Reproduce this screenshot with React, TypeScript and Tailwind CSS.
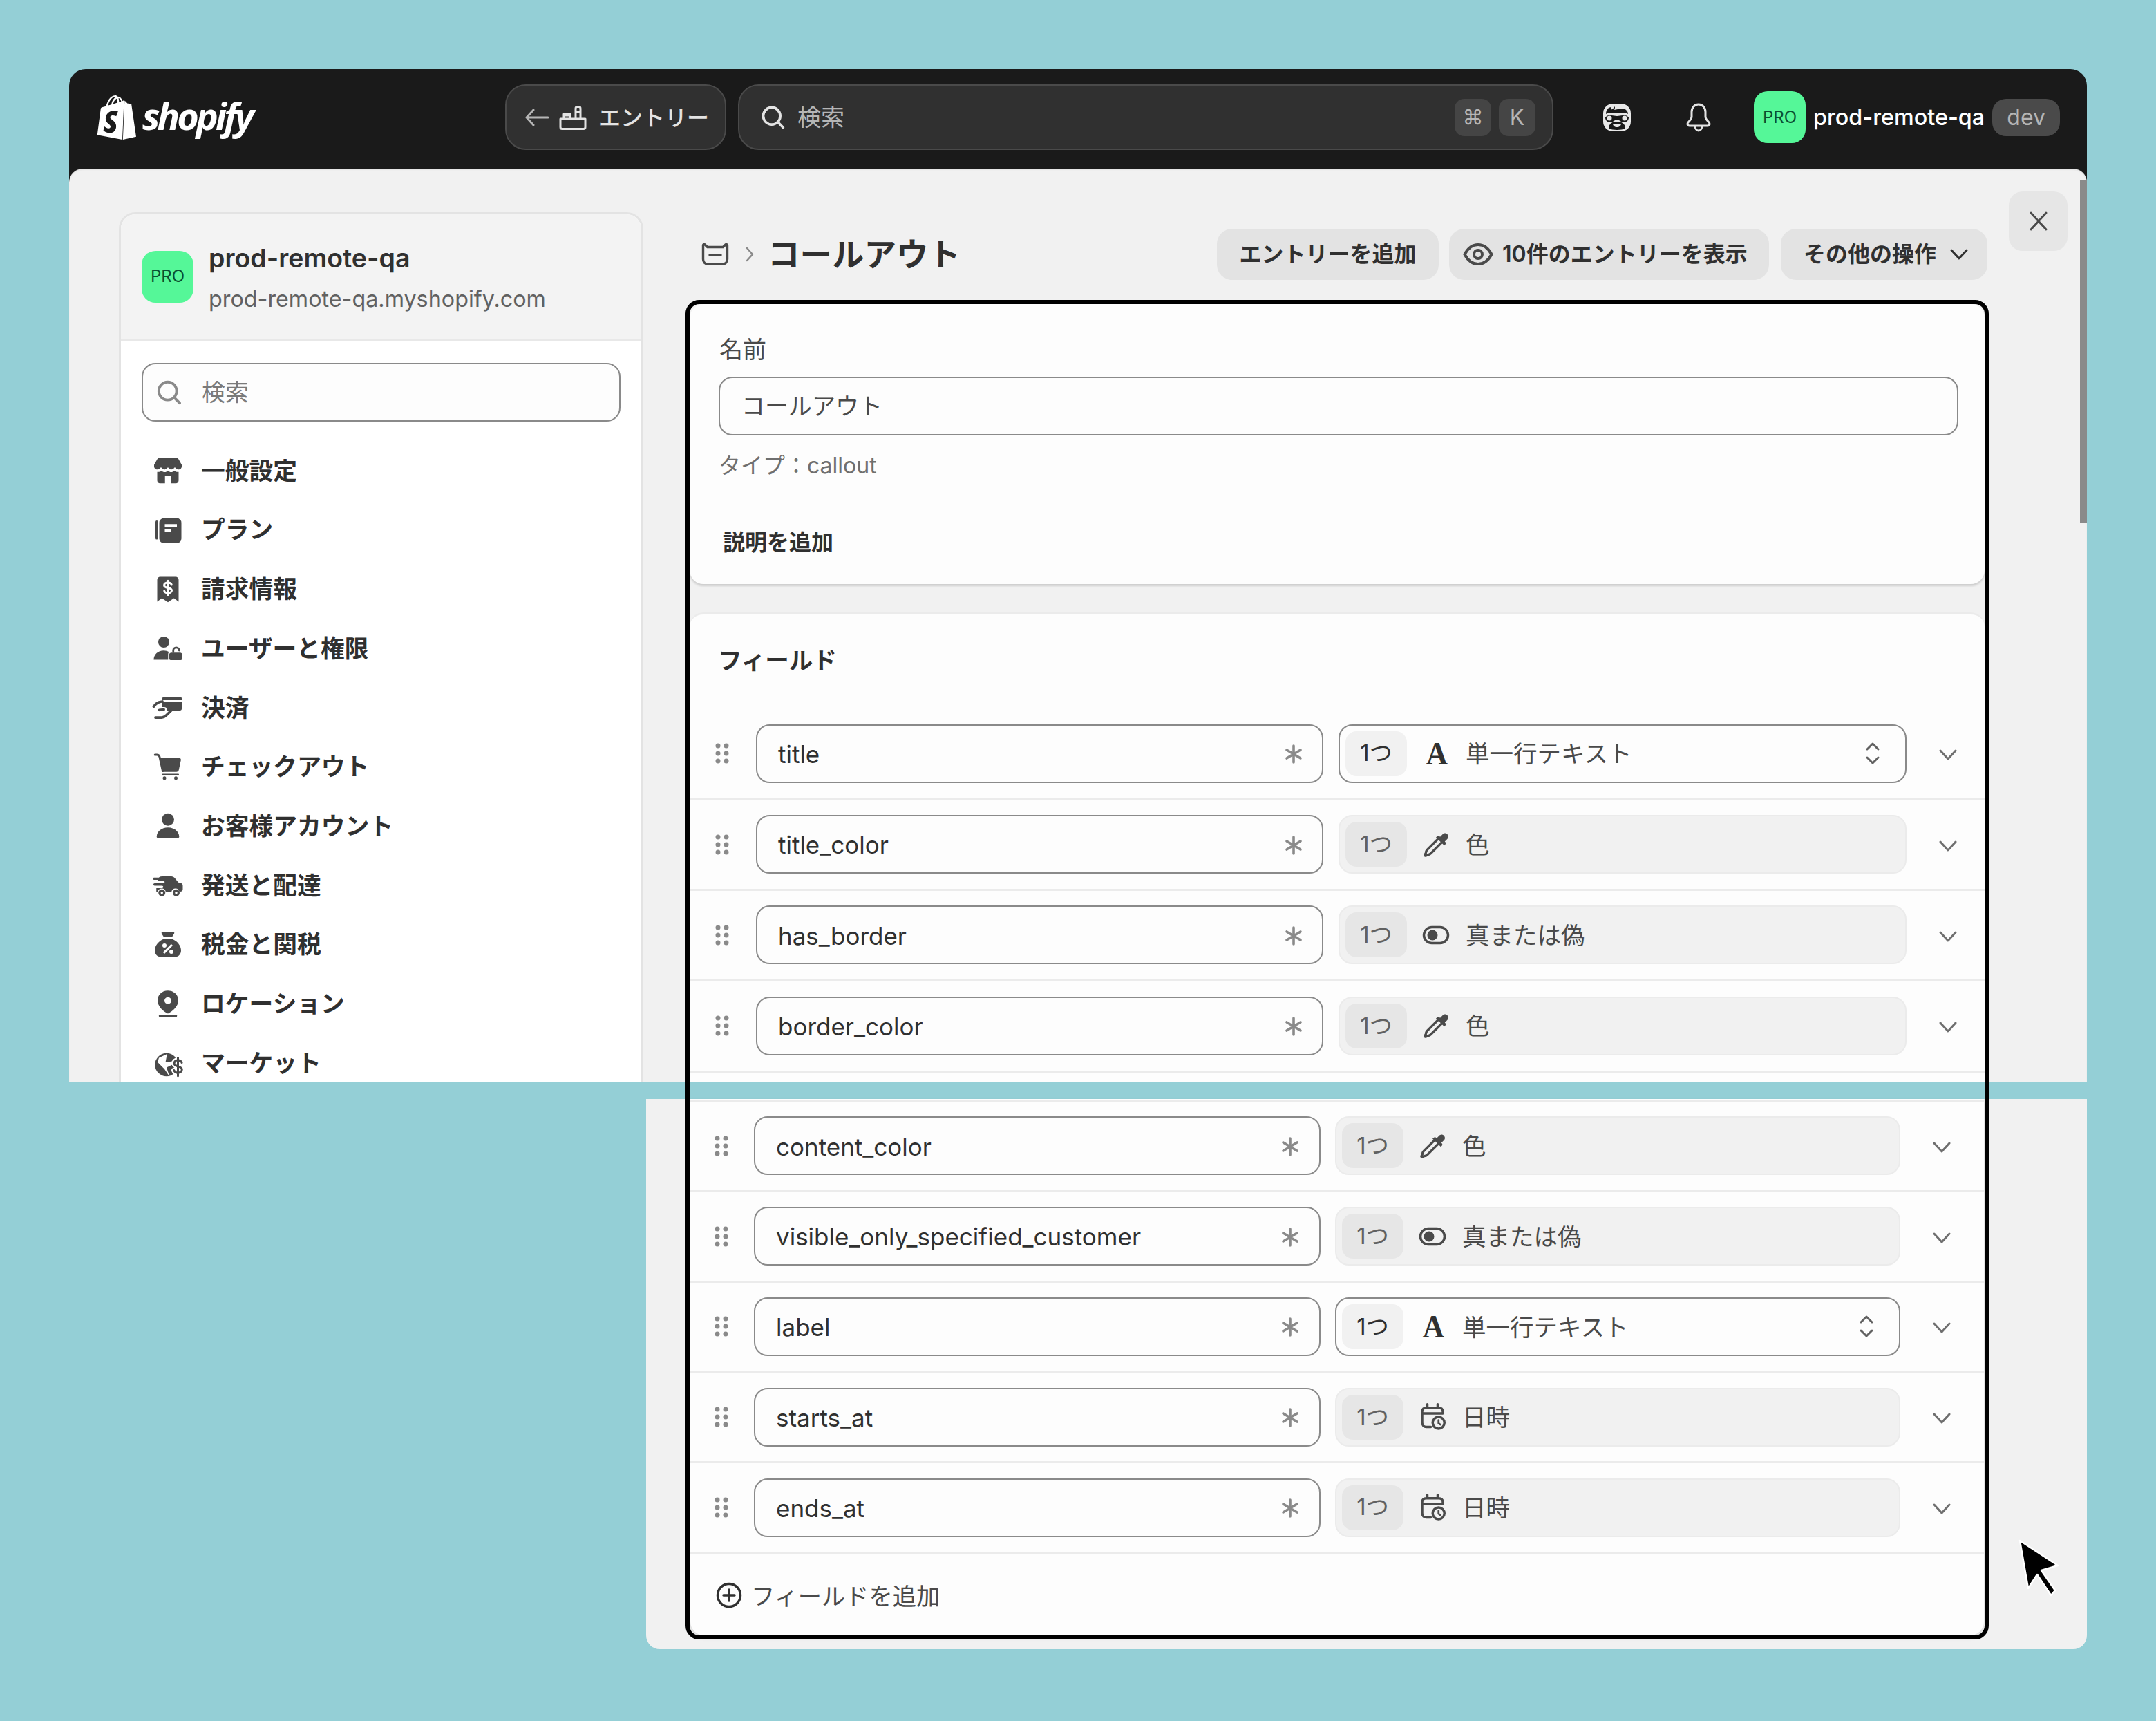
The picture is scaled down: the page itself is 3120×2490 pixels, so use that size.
import React from "react";

const FONT = "[font-family:Inter,'Noto_Sans_CJK_JP',sans-serif]";

const Icon = ({ children, className = "" }: { children: React.ReactNode; className?: string }) => (
  <svg viewBox="0 0 20 20" fill="currentColor" className={`shrink-0 ${className}`}>
    {children}
  </svg>
);

const BagLogo = () => (
  <svg viewBox="0 0 24 24" className="w-[64px] h-[64px] shrink-0 -ml-[4px]" fill="#fff">
    <path d="M15.337 23.979l7.216-1.561s-2.604-17.613-2.625-17.73c-.018-.116-.114-.192-.211-.192s-1.929-.136-1.929-.136-1.275-1.274-1.439-1.411c-.045-.037-.075-.057-.121-.074l-.914 21.104h.023zM11.71 11.305s-.81-.424-1.774-.424c-1.447 0-1.504.906-1.504 1.141 0 1.232 3.24 1.715 3.24 4.629 0 2.295-1.44 3.76-3.406 3.76-2.354 0-3.54-1.465-3.54-1.465l.646-2.086s1.245 1.066 2.28 1.066c.675 0 .975-.545.975-.932 0-1.619-2.654-1.694-2.654-4.359-.034-2.237 1.571-4.416 4.827-4.416 1.257 0 1.875.361 1.875.361l-.945 2.715-.02.01zM11.17.83c.136 0 .271.038.405.135-.984.465-2.064 1.639-2.508 3.992-.656.213-1.293.405-1.889.578C7.697 3.75 8.951.84 11.17.84V.83zm1.235 2.949v.135c-.754.232-1.583.484-2.394.736.466-1.777 1.333-2.645 2.085-2.971.193.501.309 1.176.309 2.1zm.539-2.234c.694.074 1.141.867 1.429 1.755-.349.114-.735.231-1.158.366v-.252c0-.752-.096-1.371-.271-1.871v.002zm2.992 1.289c-.02 0-.06.021-.078.021s-.289.075-.714.21c-.423-1.233-1.176-2.37-2.508-2.37h-.115C12.135.209 11.669 0 11.265 0 8.159 0 6.675 3.877 6.21 5.846c-1.194.365-2.063.636-2.16.674-.675.213-.694.232-.772.87-.075.462-1.83 14.063-1.83 14.063L15.009 24l.927-21.166z" />
  </svg>
);

const Search = ({ className = "" }: { className?: string }) => (
  <svg viewBox="0 0 20 20" fill="none" stroke="currentColor" strokeWidth="1.7" strokeLinecap="round" className={`shrink-0 ${className}`}>
    <circle cx="9" cy="9" r="5.6" />
    <path d="M13.2 13.2 16.5 16.6" />
  </svg>
);

// sidebar icons, polaris-ish
const StoreIcon = () => (
  <Icon className="w-[50px] h-[50px]">
    <path d="M5.2 2.6h9.6c.6 0 1.1.3 1.4.8L18 6.6v1c0 .9-.8 1.7-1.7 1.7-.9 0-1.7-.5-2.3-1.3-.6.8-1.3 1.3-2.1 1.3-.8 0-1.4-.5-1.9-1.3-.5.8-1.1 1.3-1.9 1.3S6.6 8.8 6 8c-.6.8-1.4 1.3-2.3 1.3C2.8 9.3 2 8.500 2 7.600v-1l1.800-3.200c.3-.5.800-.8 1.400-.8z" />
    <path fillRule="evenodd" d="M3.800 10.700c1 .1 1.800-.1 2.400-.600.600.500 1.300.700 1.900.700.700 0 1.300-.2 1.900-.700.600.500 1.200.700 1.900.700.600 0 1.300-.2 1.900-.700.600.500 1.400.700 2.400.600v5c0 .9-.7 1.600-1.600 1.600H5.400c-.9 0-1.600-.7-1.600-1.600zM8.300 13v4.300h3.400V13z" />
  </Icon>
);
const PlanIcon = () => (
  <Icon className="w-[50px] h-[50px]">
    <rect x="2.800" y="4.400" width="1.500" height="11" rx=".75" />
    <path fillRule="evenodd" d="M7.700 3h7.400A2.700 2.700 0 0 1 17.800 5.700v9.200a2.700 2.700 0 0 1-2.700 2.700H7.700A2.700 2.700 0 0 1 5 14.900V5.700A2.700 2.700 0 0 1 7.700 3zm.500 3.500v1.500h7V6.500zm0 3v1.500h3.500V9.500z" />
  </Icon>
);
const ReceiptIcon = () => (
  <Icon className="w-[50px] h-[50px]">
    <path d="M5.500 3h9A1.700 1.700 0 0 1 16.200 4.700V17.400l-2.700-2-3.500 2.300-3.500-2.300-2.700 2V4.700A1.700 1.700 0 0 1 5.500 3z" />
    <path d="M12.100 7.600c-.2-.8-1-1.200-2.100-1.200-1.300 0-2.200.6-2.200 1.500 0 2.100 4.400.9 4.400 3 0 .9-.9 1.500-2.200 1.500-1.100 0-1.900-.4-2.100-1.200M10 5.300v8.400" stroke="#fff" strokeWidth="1.200" fill="none" strokeLinecap="round" />
  </Icon>
);
const UserLockIcon = () => (
  <Icon className="w-[50px] h-[50px]">
    <circle cx="7.600" cy="6.400" r="3.200" />
    <path d="M1.800 16.600c0-3 2.400-5.300 5.800-5.300 1.200 0 2.200.3 3 .8-.3.400-.5.900-.5 1.400v3.100z" />
    <path fillRule="evenodd" d="M12.100 12.500h4.900c.8 0 1.400.6 1.400 1.400v1.900c0 .6-.5 1-1 1h-5.800c-.5 0-1-.4-1-1v-1.900c0-.8.700-1.400 1.500-1.400z" />
    <path d="M13.100 12.200v-1c0-1 .8-1.700 1.700-1.700.9 0 1.700.7 1.700 1.700" stroke="currentColor" strokeWidth="1.100" fill="none" strokeLinecap="round" />
  </Icon>
);
const PaymentIcon = () => (
  <Icon className="w-[50px] h-[50px]">
    <path d="M7.800 3.600h9.200c.6 0 1 .4 1 1v1H6.800v-1c0-.6.400-1 1-1zM6.800 6.800H18v3.800c0 .6-.4 1-1 1H9.400c.3-1.200-.4-2-1.600-2H6.800z" />
    <path d="M1.800 9.300C3 7.500 4.500 6.500 6.800 6.400M5 11.300l2.600-.3M2.800 15.600h3.600c1 0 1.800-.5 2.500-1.100l3.500-3.400" stroke="currentColor" strokeWidth="1.500" fill="none" strokeLinecap="round" strokeLinejoin="round" />
  </Icon>
);
const CartIcon = () => (
  <Icon className="w-[50px] h-[50px]">
    <path d="M2.500 3.200h1.100c.8 0 1.400.5 1.600 1.300L7 12.600" stroke="currentColor" strokeWidth="1.200" fill="none" strokeLinecap="round" />
    <path d="M5.200 5h11.200c.8 0 1.300.7 1.100 1.400l-1.200 5.600c-.2.700-.7 1.100-1.400 1.100H7z" />
    <rect x="6.600" y="14.200" width="9.800" height=".9" rx=".45" />
    <circle cx="8" cy="16.700" r="1" />
    <circle cx="14.600" cy="16.700" r="1" />
  </Icon>
);
const PersonIcon = () => (
  <Icon className="w-[50px] h-[50px]">
    <circle cx="10" cy="6.300" r="3.600" />
    <path d="M3.500 16.200c0-3 2.900-5.300 6.500-5.300s6.500 2.300 6.500 5.300c0 .5-.4.900-.9.900H4.400c-.5 0-.9-.4-.9-.9z" />
  </Icon>
);
const TruckIcon = () => (
  <Icon className="w-[50px] h-[50px]">
    <path fillRule="evenodd" d="M6.700 4.800h5.300c.8 0 1.500.4 2 1l2 2.500 1.300.3c.8.200 1.300.8 1.300 1.600v2c0 .8-.6 1.400-1.400 1.400h-.6a2.300 2.300 0 0 0-4.500 0H8.700a2.300 2.300 0 0 0-4.500 0h-.9v-2h3.300c.4 0 .7-.3.700-.7s-.3-.7-.7-.7H2.300c-.4 0-.7-.3-.7-.7s.3-.7.7-.7h5.100c.4 0 .7-.3.700-.7S7.800 7.400 7.400 7.400H4.200V6.800c0-1.100.9-2 2.500-2z" />
    <path d="M6.500 12.300a2 2 0 1 0 0 4 2 2 0 1 0 0-4zm0 1.300a.7.700 0 1 1 0 1.400.7.700 0 1 1 0-1.400zM14.800 12.300a2 2 0 1 0 0 4 2 2 0 1 0 0-4zm0 1.300a.7.700 0 1 1 0 1.400.7.700 0 1 1 0-1.400z" fillRule="evenodd" />
    <path d="M1.900 6.100h3.300" stroke="currentColor" strokeWidth="1.300" strokeLinecap="round" />
  </Icon>
);
const TaxIcon = () => (
  <Icon className="w-[50px] h-[50px]">
    <path d="M7 2.800h6c.6 0 .9.600.6 1.100L12.500 5.700h-5L6.400 3.900c-.3-.5 0-1.100.6-1.100z" />
    <path fillRule="evenodd" d="M7.600 7h4.800c2.900 1.200 5.200 3.800 5.200 6.600 0 2.600-1.900 4-4.300 4H6.700c-2.400 0-4.300-1.400-4.300-4C2.400 10.800 4.700 8.200 7.600 7zm4.300 2.900-4.800 4.800.9.900 4.800-4.800zM8 9.600a1.200 1.200 0 1 0 0 2.400 1.200 1.200 0 0 0 0-2.400zm4 3.600a1.200 1.200 0 1 0 0 2.400 1.200 1.200 0 0 0 0-2.400z" />
  </Icon>
);
const PinIcon = () => (
  <Icon className="w-[50px] h-[50px]">
    <path fillRule="evenodd" d="M10 2.500c3.500 0 6 2.500 6 5.700 0 3.200-3 6.200-6 7.600-3-1.400-6-4.400-6-7.600C4 5 6.500 2.500 10 2.500zm0 3.800a2 2 0 1 0 0 4 2 2 0 0 0 0-4z" />
    <rect x="4.700" y="16.500" width="10.600" height="1.200" rx=".6" />
  </Icon>
);
const GlobeIcon = () => (
  <Icon className="w-[50px] h-[50px]">
    <circle cx="9.200" cy="11" r="6.700" />
    <path d="M4.800 7 9.500 4.800 8.600 9.600 12.500 9v2L9.200 12.600 11 18 8 13.500 5.500 11 4 9.500z" fill="#fff" />
    <path d="M18 9.800c-.3-1-1.100-1.400-2.200-1.400-1.300 0-2.200.7-2.200 1.800 0 2.300 4.500 1.200 4.500 3.600 0 1.100-1 1.800-2.300 1.800-1.100 0-2-.5-2.300-1.400M15.800 6.900v10.600" stroke="#fff" strokeWidth="3" fill="none" strokeLinecap="round" />
    <path d="M18 9.800c-.3-1-1.100-1.400-2.200-1.400-1.300 0-2.200.7-2.200 1.800 0 2.300 4.500 1.200 4.500 3.600 0 1.100-1 1.800-2.300 1.800-1.100 0-2-.5-2.300-1.400M15.800 6.900v10.600" stroke="currentColor" strokeWidth="1.200" fill="none" strokeLinecap="round" />
  </Icon>
);

const EyeDropper = () => (
  <svg viewBox="0 0 20 20" fill="none" className="w-[50px] h-[50px] shrink-0 text-[#4a4a4a]">
    <path d="M11.700 6.200 4.900 13c-.5.500-.7 1.100-.7 1.700l-.6 1.100c-.2.400.2.800.6.600l1.100-.6c.6 0 1.200-.2 1.700-.700l6.800-6.800" stroke="currentColor" strokeWidth="1.300" strokeLinejoin="round" />
    <path d="M10.700 5.200c.4-.4 1-.4 1.400 0l.3.300 1.500-1.500c.8-.8 2-.8 2.700 0 .8.800.8 2 0 2.700l-1.500 1.500.3.300c.4.400.4 1 0 1.400l-.6.600L10 5.800z" fill="currentColor" />
  </svg>
);
const Toggle = () => (
  <svg viewBox="0 0 20 20" fill="none" className="w-[50px] h-[50px] shrink-0 text-[#4a4a4a]">
    <rect x="3" y="5.400" width="14" height="9.200" rx="4.600" stroke="currentColor" strokeWidth="1.400" />
    <circle cx="8" cy="10" r="3" fill="currentColor" />
  </svg>
);
const CalendarClock = () => (
  <svg viewBox="0 0 20 20" fill="none" stroke="currentColor" strokeWidth="1.400" strokeLinecap="round" className="w-[50px] h-[50px] shrink-0 text-[#4a4a4a]">
    <path d="M7 2.700v2M13 2.700v2M9 15.800H6.500C5 15.800 4 14.800 4 13.300V6.800c0-1.300 1-2.100 2.300-2.100h7.400c1.300 0 2.300.8 2.300 2.100v1.200M4.400 8h11.200" />
    <circle cx="13.500" cy="13.400" r="3.400" />
    <path d="M13.500 11.800v1.800l1 .8" strokeWidth="1.100" />
  </svg>
);
const TextA = () => (
  <span className="w-[50px] h-[50px] shrink-0 flex items-center justify-center pl-[3px] text-[47px] leading-none font-bold scale-x-[0.92] [font-family:'Liberation_Serif',serif] text-[#303030]">
    A
  </span>
);

const Chevron = ({ className = "" }: { className?: string }) => (
  <svg viewBox="0 0 26 16" fill="none" stroke="currentColor" strokeWidth="3" strokeLinecap="round" strokeLinejoin="round" className={`w-[26px] h-[16px] shrink-0 ${className}`}>
    <path d="M2 2l11 12L24 2" />
  </svg>
);

const Star = () => (
  <svg viewBox="0 0 26 28" fill="none" stroke="#8a8a8a" strokeWidth="3.600" strokeLinecap="round" className="w-[26px] h-[28px] shrink-0 mt-[2px]">
    <path d="M13 2v24M3 8l20 12M23 8 3 20" />
  </svg>
);

const Grip = () => (
  <svg viewBox="0 0 20 30" fill="#8a8a8a" className="w-[20px] h-[30px] shrink-0">
    <circle cx="4" cy="4" r="3.500" />
    <circle cx="16" cy="4" r="3.500" />
    <circle cx="4" cy="15" r="3.500" />
    <circle cx="16" cy="15" r="3.500" />
    <circle cx="4" cy="26" r="3.500" />
    <circle cx="16" cy="26" r="3.500" />
  </svg>
);

const UpDown = () => (
  <svg viewBox="0 0 22 34" fill="none" stroke="#616161" strokeWidth="3" strokeLinecap="round" strokeLinejoin="round" className="w-[22px] h-[34px] shrink-0">
    <path d="M3 11l8-8 8 8M3 23l8 8 8-8" />
  </svg>
);

const ProBadge = () => (
  <div className="w-[75px] h-[75px] rounded-[20px] bg-[#55f798] flex items-center justify-center text-[24px] text-[#0a4f33] shrink-0">
    PRO
  </div>
);

const navItems: [React.ReactNode, string][] = [
  [<StoreIcon />, "一般設定"],
  [<PlanIcon />, "プラン"],
  [<ReceiptIcon />, "請求情報"],
  [<UserLockIcon />, "ユーザーと権限"],
  [<PaymentIcon />, "決済"],
  [<CartIcon />, "チェックアウト"],
  [<PersonIcon />, "お客様アカウント"],
  [<TruckIcon />, "発送と配達"],
  [<TaxIcon />, "税金と関税"],
  [<PinIcon />, "ロケーション"],
  [<GlobeIcon />, "マーケット"],
];

type Field = { name: string; kind: "text" | "color" | "bool" | "date"; active?: boolean };

const topFields: Field[] = [
  { name: "title", kind: "text", active: true },
  { name: "title_color", kind: "color" },
  { name: "has_border", kind: "bool" },
  { name: "border_color", kind: "color" },
];

const bottomFields: Field[] = [
  { name: "content_color", kind: "color" },
  { name: "visible_only_specified_customer", kind: "bool" },
  { name: "label", kind: "text", active: true },
  { name: "starts_at", kind: "date" },
  { name: "ends_at", kind: "date" },
];

const kinds = {
  text: { icon: <TextA />, label: "単一行テキスト" },
  color: { icon: <EyeDropper />, label: "色" },
  bool: { icon: <Toggle />, label: "真または偽" },
  date: { icon: <CalendarClock />, label: "日時" },
};

const FieldRow = ({ field, lower }: { field: Field; lower?: boolean }) => {
  const kind = kinds[field.kind];
  return (
    <div className={`flex items-center border-b-[3px] border-[#ebebeb] ${lower ? "h-[130.8px] pl-[35px]" : "h-[131.4px] pl-[37px]"}`}>
      <Grip />
      <div className={`flex items-center justify-between bg-[#fdfdfd] border-2 border-[#8a8a8a] rounded-[20px] h-[85px] pl-[30px] ${lower ? "ml-[37px] w-[820px] pr-[29px]" : "ml-[39px] w-[821px] pr-[28px]"}`}>
        <span className="text-[35px] text-[#303030] mt-[2px]">{field.name}</span>
        <Star />
      </div>
      <div className={`flex items-center h-[85px] rounded-[20px] border-2 pl-[8px] pr-[36px] ${lower ? "ml-[21px] w-[818px]" : "ml-[22px] w-[822px]"} ${field.active ? "bg-[#fdfdfd] border-[#8a8a8a]" : "bg-[#f1f1f1] border-[#ebebeb]"}`}>
        <span className={`h-[65px] w-[89px] rounded-[16px] flex items-center justify-center text-[33px] shrink-0 ${field.active ? "bg-[#f1f1f1] text-[#303030]" : "bg-[#e6e6e6] text-[#616161]"}`}>
          1つ
        </span>
        <span className="ml-[17px] flex">{kind.icon}</span>
        <span className="ml-[18px] mt-[2px] text-[34.5px] text-[#4a4a4a] flex-1">{kind.label}</span>
        {field.active && <UpDown />}
      </div>
      <Chevron className="text-[#6f6f6f] mt-[4px] ml-[47px]" />
    </div>
  );
};

const Button = ({ children, className = "" }: { children: React.ReactNode; className?: string }) => (
  <button className={`h-[74px] rounded-[22px] bg-[#e3e3e3] text-[32px] font-semibold text-[#303030] flex items-center shrink-0 ${className}`}>
    {children}
  </button>
);

const App: React.FC = () => {
  return (
    <div className={`relative w-[3120px] h-[2490px] bg-[#94cfd6] pt-[100px] pl-[100px] ${FONT}`}>
      {/* upper slice of the screenshot */}
      <div className="w-[2920px] h-[1466px] overflow-hidden rounded-t-[24px] bg-[#1a1a1a] flex flex-col">
        {/* top bar */}
        <div className="h-[144px] shrink-0 flex items-center pb-[5px] pl-[41px]">
          <div className="w-[590px] shrink-0 flex items-center">
            <BagLogo />
            <span className="ml-[5px] -mt-[6px] text-[54px] leading-none font-bold italic text-white tracking-[-4px] [font-family:'Open_Sans',sans-serif]">
              shopify
            </span>
          </div>
          <div className="w-[320px] h-[95px] shrink-0 rounded-[30px] bg-[#303030] border-2 border-[#4a4a4a] flex items-center pl-[26px] text-[#e3e3e3]">
            <svg viewBox="0 0 36 28" fill="none" stroke="currentColor" strokeWidth="3" strokeLinecap="round" strokeLinejoin="round" className="w-[36px] h-[28px] shrink-0 text-[#b5b5b5]">
              <path d="M34 14H3M13 3 3 14l10 11" />
            </svg>
            <svg viewBox="0 0 40 36" fill="none" stroke="currentColor" strokeWidth="3" strokeLinejoin="round" className="ml-[14px] w-[40px] h-[36px] shrink-0">
              <path d="M2 20h36v12c0 1.500-1 2.500-2.500 2.500h-31C3 34.500 2 33.500 2 32z" />
              <path d="M7 20v-7h9v7M24 20V5c0-1.500 1-2.500 2.500-2.500h2c1.500 0 2.500 1 2.500 2.500v15" />
              <path d="M24 10h7M7 15h9" />
            </svg>
            <span className="ml-[17px] -mt-[4px] text-[32px] font-medium [font-family:'Noto_Sans_CJK_JP',sans-serif] whitespace-nowrap">エントリー</span>
          </div>
          <div className="ml-[17px] w-[1180px] h-[95px] shrink-0 rounded-[30px] bg-[#303030] border-2 border-[#4a4a4a] flex items-center pl-[31px] pr-[24px]">
            <Search className="w-[44px] h-[44px] text-[#e3e3e3] -ml-[4px]" />
            <span className="ml-[13px] flex-1 text-[34px] text-[#b5b5b5]">検索</span>
            <span className="w-[53px] h-[54px] rounded-[14px] bg-[#454545] flex items-center justify-center text-[#b5b5b5] text-[30px]">⌘</span>
            <span className="ml-[11px] w-[53px] h-[54px] rounded-[14px] bg-[#454545] flex items-center justify-center text-[#b5b5b5] text-[32px]">K</span>
          </div>
          {/* incognito face */}
          <svg viewBox="0 0 40 40" className="ml-[72px] w-[40px] h-[40px] shrink-0">
            <rect x="0" y="0" width="40" height="40" rx="14" fill="#e8e8e8" />
            <path d="M4 15c0-5 3-10 8-10-1 2-1 3-1 4 3-1 4-3 6-5 0 2 0 3-1 5 5-1 9-2 13-2 4 1 7 4 7 8-3-2-6-2-8-1H13C10 13 7 13 4 15z" fill="#1a1a1a" />
            <path d="M3 20c2-3 6-4 9-3 3 0 5 1 8 1s5-1 8-1c3-1 7 0 9 3 0 4-3 7-7 7-3 0-5-2-7-3-2-1-4-1-6 0-2 1-4 3-7 3-4 0-7-3-7-7z" fill="#1a1a1a" />
            <circle cx="9" cy="21" r="3.500" fill="#e8e8e8" />
            <circle cx="31" cy="21" r="3.500" fill="#e8e8e8" />
            <path d="M8 36c0-7 5-10 12-10s12 3 12 10c-3 1-7 2-12 2s-9-1-12-2z" fill="#1a1a1a" />
            <path d="M14 29c3 1 9 1 12 0 0 3-3 5-6 5s-6-2-6-5z" fill="#e8e8e8" />
          </svg>
          <svg viewBox="0 0 38 42" fill="none" stroke="#e3e3e3" strokeWidth="3" strokeLinejoin="round" className="ml-[79px] w-[38px] h-[42px] shrink-0">
            <path d="M19 2c-6 0-10 5-10 11v7c0 3-2 5-5 8-2 2-1 5 2 5h26c3 0 4-3 2-5-3-3-5-5-5-8v-7c0-6-4-11-10-11z" />
            <path d="M14 33c0 4 2 7 5 7s5-3 5-7" />
          </svg>
          <div className="ml-[61px]">
            <ProBadge />
          </div>
          <span className="ml-[11px] mt-[1px] text-[32.3px] font-medium text-white whitespace-nowrap">prod-remote-qa</span>
          <span className="ml-[11px] w-[98px] h-[54px] rounded-[20px] bg-[#4a4a4a] flex items-center justify-center text-[#b5b5b5] text-[32px]">dev</span>
        </div>

        {/* page under the bar */}
        <div className="relative flex-1 min-h-0 bg-[#f1f1f1] rounded-t-[20px] flex items-start shadow-[inset_0_2px_2px_rgba(0,0,0,0.06)]">
          {/* sidebar */}
          <div className="ml-[72px] mt-[63px] w-[759px] h-[1300px] shrink-0 rounded-[24px] border-[3px] border-[#e3e3e3] bg-white overflow-hidden">
            <div className="h-[183px] bg-[#f3f3f3] border-b-[3px] border-[#e8e8e8] flex items-center pl-[30px]">
              <ProBadge />
              <div className="ml-[22px] pt-[4px] flex flex-col">
                <span className="text-[37.5px] leading-[44px] font-semibold text-[#303030]">prod-remote-qa</span>
                <span className="mt-[17px] text-[32.3px] leading-[40px] text-[#616161]">prod-remote-qa.myshopify.com</span>
              </div>
            </div>
            <div className="mx-[30px] mt-[32px] h-[85px] rounded-[20px] border-2 border-[#8a8a8a] bg-[#fdfdfd] flex items-center pl-[15px]">
              <Search className="w-[46px] h-[46px] text-[#8a8a8a]" />
              <span className="ml-[24px] text-[34px] text-[#7a7a7a]">検索</span>
            </div>
            <div className="mt-[28px] pl-[43px] flex flex-col">
              {navItems.map(([icon, label]) => (
                <div key={label} className="h-[85.7px] flex items-center shrink-0 text-[#4a4a4a]">
                  {icon}
                  <span className="ml-[23px] text-[34.75px] font-semibold text-[#303030]">{label}</span>
                </div>
              ))}
            </div>
          </div>

          {/* main column */}
          <div className="ml-[67px] w-[1874px] shrink-0">
            <div className="mt-[87px] h-[74px] flex items-center pl-[17px] -mr-[4px]">
              <svg viewBox="0 0 40 34" fill="none" stroke="#4a4a4a" strokeWidth="3.400" strokeLinecap="round" strokeLinejoin="round" className="w-[40px] h-[34px] shrink-0">
                <path d="M2.500 11V4c0-1.500 1.700-2 2.700-1l3.500 3.500h22.600L34.800 3c1-1 2.700-.5 2.700 1v20c0 4-2.500 7-7 7h-21c-4.500 0-7-3-7-7z" />
                <path d="M12 18h16" />
              </svg>
              <svg viewBox="0 0 12 24" fill="none" stroke="#8a8a8a" strokeWidth="2.500" strokeLinecap="round" strokeLinejoin="round" className="ml-[24px] w-[12px] h-[24px] shrink-0">
                <path d="M2 3l8 9-8 9" />
              </svg>
              <span className="ml-[20px] -mt-[7px] text-[46.5px] font-bold text-[#303030] flex-1 [font-family:'Noto_Sans_CJK_JP',sans-serif]">コールアウト</span>
              <div className="flex items-center gap-[17px]">
                <Button className="w-[321px] justify-center -mr-[2px]">エントリーを追加</Button>
                <Button className="w-[463px] pl-[17px]">
                  <svg viewBox="0 0 20 20" fill="none" stroke="#4a4a4a" strokeWidth="1.600" className="w-[50px] h-[50px] shrink-0 mr-[10px]">
                    <path d="M2.200 10c2-3.800 4.700-5.600 7.800-5.600s5.800 1.800 7.800 5.600c-2 3.800-4.700 5.600-7.800 5.600S4.200 13.800 2.200 10z" />
                    <circle cx="10" cy="10" r="2.400" />
                  </svg>
                  <span>10件のエントリーを表示</span>
                </Button>
                <Button className="w-[299px] pl-[33px]">
                  その他の操作
                  <Chevron className="ml-[20px] text-[#303030]" />
                </Button>
              </div>
            </div>

            <div className="mt-[35px] h-[405px] bg-[#fdfdfd] rounded-[20px] shadow-[0_3px_3px_rgba(0,0,0,0.14)] pl-[42px] pr-[38px] flex flex-col">
              <span className="ml-[1px] mt-[43px] text-[34px] leading-[46px] text-[#4a4a4a]">名前</span>
              <div className="mt-[16px] h-[85px] rounded-[20px] border-2 border-[#8a8a8a] bg-[#fdfdfd] flex items-center pl-[31px] text-[34px] text-[#4a4a4a]">
                コールアウト
              </div>
              <span className="mt-[21px] text-[32px] leading-[46px] text-[#6f6f6f]">タイプ：callout</span>
              <span className="ml-[6px] mt-[65px] text-[32px] leading-[46px] font-semibold text-[#303030]">説明を追加</span>
            </div>

            <div className="mt-[41px] bg-[#fdfdfd] rounded-t-[20px] border-t-[3px] border-[#ebebeb] h-[800px]">
              <div className="h-[137px] pl-[41px] pt-[44px]">
                <span className="text-[34.5px] leading-[46px] font-semibold text-[#303030]">フィールド</span>
              </div>
              {topFields.map((field) => (
                <FieldRow key={field.name} field={field} />
              ))}
            </div>
          </div>

          <button className="ml-[35px] mt-[33px] w-[85px] h-[86px] rounded-[20px] bg-[#e6e6e6] flex items-center justify-center shrink-0">
            <svg viewBox="0 0 28 30" fill="none" stroke="#4a4a4a" strokeWidth="3" strokeLinecap="round" className="w-[28px] h-[30px]">
              <path d="M3 3l22 24M25 3 3 27" />
            </svg>
          </button>

          {/* scrollbar */}
          <div className="absolute right-0 top-[16px] w-[10px] h-[496px] bg-[#8a8a8a]" />
        </div>
      </div>

      {/* lower slice, continues the list further down */}
      <div className="mt-[24px] ml-[835px] w-[2085px] h-[796px] bg-[#f1f1f1] rounded-b-[20px] pl-[64px]">
        <div className="w-[1872px] h-[776px] bg-[#fdfdfd] rounded-b-[20px] shadow-[0_3px_6px_rgba(0,0,0,0.1)]">
          <div className="h-[4px] border-b-[3px] border-[#ebebeb]" />
          {bottomFields.map((field) => (
            <FieldRow key={field.name} field={field} lower />
          ))}
          <div className="flex items-center h-[120px] pl-[37px] text-[#4a4a4a]">
            <svg viewBox="0 0 38 38" fill="none" stroke="#303030" strokeWidth="3.500" strokeLinecap="round" className="w-[38px] h-[38px] shrink-0">
              <circle cx="19" cy="19" r="16.500" />
              <path d="M19 11v16M11 19h16" />
            </svg>
            <span className="ml-[13px] mt-[3px] text-[34.25px] text-[#4a4a4a]">フィールドを追加</span>
          </div>
        </div>
      </div>

      {/* highlight frame lying over both slices */}
      <div className="absolute left-[992px] top-[434px] w-[1886px] h-[1938px] border-[6px] border-black rounded-[20px] pointer-events-none" />

      {/* mouse pointer */}
      <svg viewBox="0 0 60 84" className="absolute left-[2921px] top-[2227px] w-[60px] h-[84px]">
        <path d="M2 2 57 38 33 45 53 74 47 81 27 51 14 71z" fill="#000" stroke="#fff" strokeWidth="2.500" strokeLinejoin="round" />
      </svg>
    </div>
  );
};

export default App;
